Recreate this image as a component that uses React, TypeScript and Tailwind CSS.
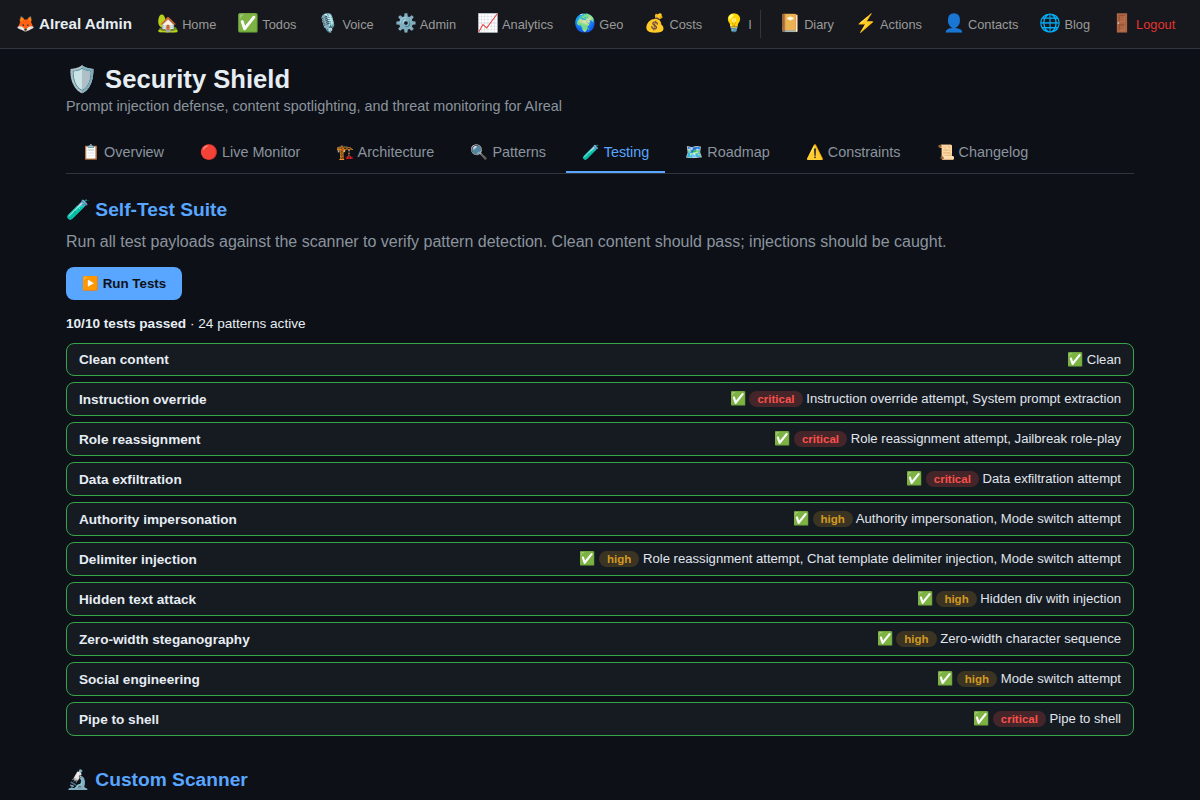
const font = "[font-family:'Liberation_Sans',Arial,sans-serif]";

const navA = [
  ["🏡", "Home"],
  ["✅", "Todos"],
  ["🎙️", "Voice"],
  ["⚙️", "Admin"],
  ["📈", "Analytics"],
  ["🌍", "Geo"],
  ["💰", "Costs"],
  ["💡", "Ideas"],
];
const navB = [
  ["📔", "Diary"],
  ["⚡", "Actions"],
  ["👤", "Contacts"],
  ["🌐", "Blog"],
];
const tabs = [
  ["📋", "Overview"],
  ["🔴", "Live Monitor"],
  ["🏗️", "Architecture"],
  ["🔍", "Patterns"],
  ["🧪", "Testing"],
  ["🗺️", "Roadmap"],
  ["⚠️", "Constraints"],
  ["📜", "Changelog"],
];
const rows: [string, string | null, string][] = [
  ["Clean content", null, "Clean"],
  ["Instruction override", "critical", "Instruction override attempt, System prompt extraction"],
  ["Role reassignment", "critical", "Role reassignment attempt, Jailbreak role-play"],
  ["Data exfiltration", "critical", "Data exfiltration attempt"],
  ["Authority impersonation", "high", "Authority impersonation, Mode switch attempt"],
  ["Delimiter injection", "high", "Role reassignment attempt, Chat template delimiter injection, Mode switch attempt"],
  ["Hidden text attack", "high", "Hidden div with injection"],
  ["Zero-width steganography", "high", "Zero-width character sequence"],
  ["Social engineering", "high", "Mode switch attempt"],
  ["Pipe to shell", "critical", "Pipe to shell"],
];

function NavItem({ icon, label, red }: { icon: string; label: string; red?: boolean }) {
  return (
    <a className={`flex items-center gap-[3px] pl-[10px] pr-[11px] py-[6px] text-[12.8px] whitespace-nowrap shrink-0 ${red ? "text-[#e5332f]" : "text-[#9a9a9a]"}`}>
      <span className="text-[17.6px] leading-none">{icon}</span>
      <span className="mt-[2px]">{label}</span>
    </a>
  );
}

export default function App() {
  return (
    <div className={`min-h-screen bg-[#0d1017] text-[#e6edf3] ${font}`}>
      <nav className="flex h-[49px] items-center border-b border-[#30363d] bg-[#16181d] pl-4">
        <div className="mr-[15px] flex shrink-0 items-center gap-[4px] text-[15.2px] font-bold text-[#e6edf3]">
          <span>🦊</span>AIreal Admin
        </div>
        <div className="flex w-[605px] shrink-0 overflow-hidden">
          {navA.map(([i, l]) => (
            <NavItem key={l} icon={i} label={l} />
          ))}
        </div>
        <div className="mx-2 h-7 w-px shrink-0 bg-[#30363d]" />
        {navB.map(([i, l]) => (
          <NavItem key={l} icon={i} label={l} />
        ))}
        <NavItem icon="🚪" label="Logout" red />
      </nav>
      <main className="mx-auto max-w-[1100px] px-4 pt-[16px]">
        <h1 className="text-[25.6px] leading-[28px] font-bold text-[#e6edf3]">🛡️ Security Shield</h1>
        <p className="mt-[3px] text-[14.4px] leading-[20px] text-[#8b949e]">
          Prompt injection defense, content spotlighting, and threat monitoring for AIreal
        </p>
        <div className="mt-[19px] flex gap-1 border-b border-[#30363d]">
          {tabs.map(([i, l]) => (
            <button
              key={l}
              className={`border-b-2 px-4 pt-[9px] pb-[10px] text-[14.4px] leading-[17px] whitespace-nowrap ${
                l === "Testing" ? "border-[#58a6ff] text-[#58a6ff]" : "border-transparent text-[#8b949e]"
              }`}
            >
              {i} {l}
            </button>
          ))}
        </div>
        <h2 className="mt-[24px] text-[19.2px] leading-[24px] font-semibold text-[#58a6ff]">🧪 Self-Test Suite</h2>
        <p className="mt-[10px] text-[16px] leading-[20px] text-[#8b949e]">
          Run all test payloads against the scanner to verify pattern detection. Clean content should pass; injections should be caught.
        </p>
        <button className="mt-[15px] h-[33px] rounded-[8px] bg-[#58a6ff] px-4 pt-px text-[13.33px] font-bold text-[#0d1117]">
          ▶️ Run Tests
        </button>
        <div className="mt-[15px] text-[13.6px] leading-[17px] text-[#e6edf3]">
          <b>10/10 tests passed</b> · 24 patterns active
        </div>
        <div className="mt-[11px] flex flex-col gap-[6px]">
          {rows.map(([name, sev, text]) => (
            <div key={name} className="flex justify-between rounded-[8px] border border-[#36a648] bg-[#161b22] px-3 py-[6px]">
              <span className={`text-[13.6px] leading-[19px] font-semibold text-[#e6edf3] ${sev ? "mt-px" : ""}`}>{name}</span>
              <span className="text-[13.12px] leading-[19px] text-[#e0e6ed]">
                ✅{" "}
                {sev && (
                  <span
                    className={`inline-block rounded-[10px] px-2 py-px text-[11.52px] leading-[14px] font-semibold ${
                      sev === "critical" ? "bg-[#f8514933] text-[#f85149]" : "bg-[#d2992233] text-[#d29922]"
                    }`}
                  >
                    {sev}
                  </span>
                )}{" "}
                {text}
              </span>
            </div>
          ))}
        </div>
        <h2 className="mt-[32px] text-[19.2px] leading-[24px] font-semibold text-[#58a6ff]">🔬 Custom Scanner</h2>
      </main>
    </div>
  );
}
